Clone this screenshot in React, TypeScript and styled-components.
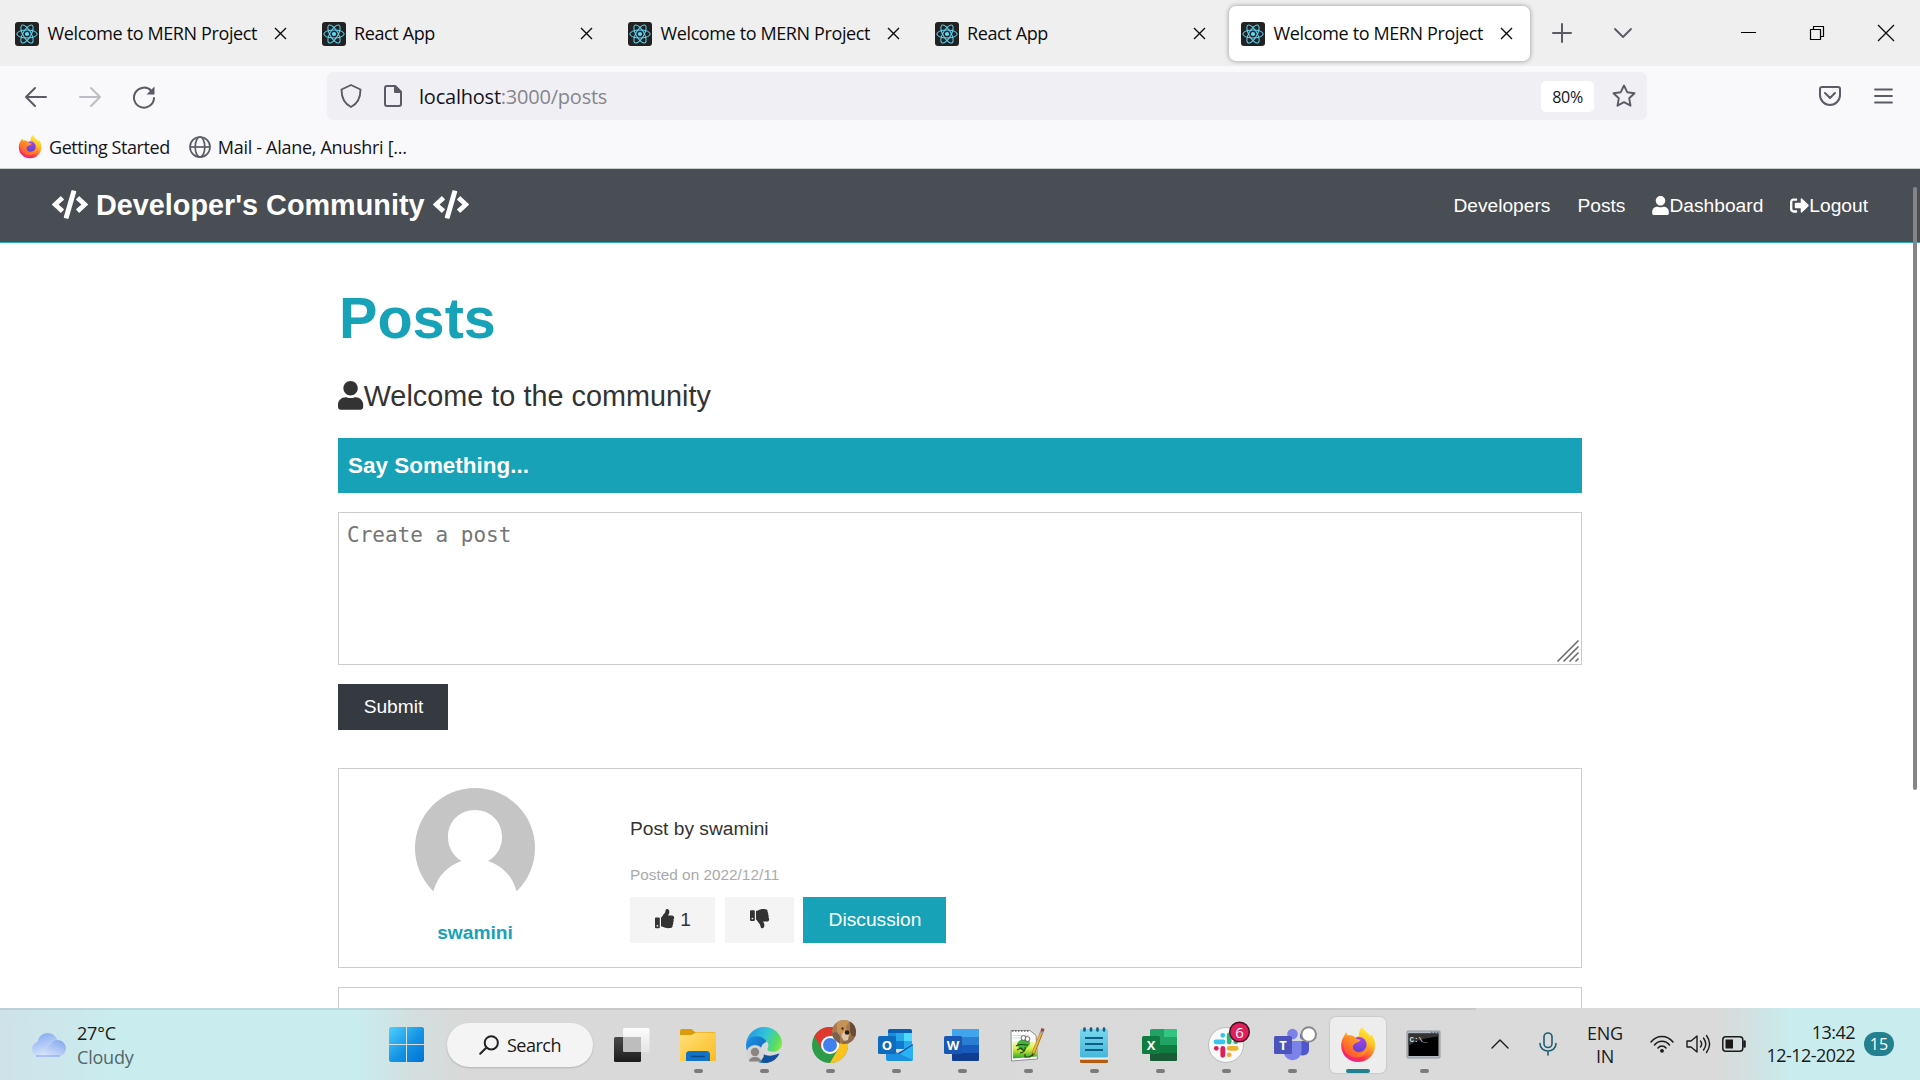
import React from "react";
import styled, { createGlobalStyle } from "styled-components";
import { FaCode, FaUser, FaSignOutAlt, FaThumbsUp, FaThumbsDown } from "react-icons/fa";

const ui = `"Open Sans", "Noto Sans", sans-serif`;
const arial = `"Liberation Sans", Arial, sans-serif`;
const teal = "#17a2b8";

const Global = createGlobalStyle`
  *, *::before, *::after { box-sizing: border-box; }
  body { margin: 0; background: #fff; overflow: hidden; }
  svg { display: block; flex: none; overflow: visible; }
  h1, h2, h3, p { margin: 0; }
`;

const Screen = styled.div`
  width: 1920px;
  height: 1080px;
  display: flex;
  flex-direction: column;
  overflow: hidden;
`;

/* ---------- browser chrome ---------- */
const TabStrip = styled.div`
  height: 66px;
  flex: none;
  display: flex;
  align-items: center;
  background: #efefef;
  padding-left: 3px;
`;
const Tab = styled.div<{ $active?: boolean }>`
  width: ${(p) => (p.$active ? 301 : 306.5)}px;
  height: 55px;
  flex: none;
  display: flex;
  align-items: center;
  gap: 8.5px;
  padding: 1px 16px 0 12px;
  border-radius: 7px;
  background: ${(p) => (p.$active ? "#fff" : "transparent")};
  box-shadow: ${(p) => (p.$active ? "0 0 5px rgba(0, 0, 0, 0.38)" : "none")};
`;
const TabTitle = styled.span`
  flex: 1;
  white-space: nowrap;
  font: 18px/26px ${ui};
  letter-spacing: -0.38px;
  padding-bottom: 1px;
  color: #0c0c0d;
`;
const TabClose = styled.div<{ $active?: boolean }>`
  width: 13px;
  margin-right: ${(p) => (p.$active ? 0 : 6)}px;
`;
const StripIcons = styled.div`
  display: flex;
  align-items: center;
  margin-left: 23px;
  gap: 43px;
`;
const WindowButtons = styled.div`
  display: flex;
  align-items: center;
  gap: 54px;
  margin-left: auto;
  margin-right: 26px;
`;
const Toolbar = styled.div`
  height: 61px;
  flex: none;
  display: flex;
  align-items: center;
  background: #f9f9fb;
  padding: 0 27px 0 25px;
`;
const NavIcons = styled.div`
  display: flex;
  gap: 32px;
  width: 302px;
`;
const UrlBar = styled.div`
  width: 1320px;
  height: 48px;
  margin-bottom: 1px;
  display: flex;
  align-items: center;
  background: #f0f0f4;
  border-radius: 6px;
  padding: 0 11px 0 12px;
`;
const UrlText = styled.div`
  flex: 1;
  margin-left: 16px;
  padding-top: 2px;
  font: 20px/28px ${ui};
  letter-spacing: -0.22px;
  color: #15141a;
  span { color: #86858c; }
`;
const PageIconSlot = styled.div`margin-left: 20px;`;
const Zoom = styled.div`
  width: 53px;
  height: 31px;
  margin-right: 18px;
  border-radius: 5px;
  background: #fff;
  text-align: center;
  font: 16px/32px ${ui};
  letter-spacing: -0.3px;
  color: #15141a;
`;
const RightTools = styled.div`
  margin-left: auto;
  display: flex;
  align-items: center;
  gap: 33px;
  padding-bottom: 2px;
`;
const Bookmarks = styled.div`
  height: 42px;
  flex: none;
  display: flex;
  background: #f9f9fb;
  border-bottom: 1px solid #c9cdc9;
  padding: 8px 0 0 18px;
`;
const Bookmark = styled.div<{ $spacing: number }>`
  display: flex;
  align-items: center;
  gap: 7px;
  height: 24px;
  margin-right: 19px;
  font: 18px/24px ${ui};
  letter-spacing: ${(p) => p.$spacing}px;
  color: #15141a;
  white-space: nowrap;
`;

/* ---------- web page ---------- */
const Page = styled.div`
  position: relative;
  flex: 1;
  min-height: 0;
  overflow: hidden;
  font: 19.2px/30.7px ${arial};
  color: #333;
`;
const SiteNav = styled.nav`
  height: 74px;
  display: flex;
  align-items: center;
  justify-content: space-between;
  padding: 0 52px;
  background: #494d54;
  border-bottom: 1px solid #2aa9ba;
  color: #fff;
`;
const Brand = styled.h1`
  display: flex;
  align-items: center;
  gap: 8px;
  padding-bottom: 2px;
  font-size: 28.8px;
  font-weight: 700;
  line-height: 34px;
`;
const Links = styled.div`
  display: flex;
  gap: 27px;
  padding-top: 1px;
`;
const NavLink = styled.a`
  display: flex;
  align-items: center;
  color: #fff;
`;
const Main = styled.main`
  width: 1244px;
  margin: 0 auto;
  padding-top: 41px;
`;
const Heading = styled.h1`
  padding-left: 1px;
  font-size: 57.6px;
  line-height: 69px;
  color: ${teal};
`;
const Lead = styled.p`
  display: flex;
  align-items: center;
  margin-top: 20px;
  height: 46px;
  font-size: 28.8px;
  letter-spacing: 0.02px;
  svg { margin: 0 0.5px 2px 0; }
`;
const FormHeader = styled.h3`
  margin-top: 19px;
  height: 55px;
  padding: 0 10px;
  background: ${teal};
  color: #fff;
  font-size: 22.46px;
  line-height: 55px;
`;
const PostInput = styled.div`
  height: 153px;
  margin-top: 19px;
  padding: 8px 2px 2px 8px;
  border: 1px solid #ccc;
  display: flex;
  justify-content: space-between;
  font: 21px/28px "DejaVu Sans Mono", monospace;
  color: #757575;
  svg { align-self: flex-end; }
`;
const Button = styled.button<{ $kind: "dark" | "light" | "primary"; $width: number }>`
  display: flex;
  align-items: center;
  justify-content: center;
  gap: 6px;
  width: ${(p) => p.$width}px;
  height: 46px;
  padding: 0 0 0 1px;
  border: 0;
  font: 19.2px/46px ${arial};
  background: ${(p) => ({ dark: "#343a40", light: "#f4f4f4", primary: teal })[p.$kind]};
  color: ${(p) => (p.$kind === "light" ? "#333" : "#fff")};
  svg { margin-bottom: 2px; }
`;
const SubmitRow = styled.div`
  margin: 19px 0 38px;
`;
const Card = styled.article`
  height: 200px;
  margin-bottom: 19px;
  padding: 19px;
  border: 1px solid #ccc;
  display: grid;
  grid-template-columns: 1fr 4fr;
  column-gap: 38.4px;
`;
const Author = styled.div`
  display: flex;
  flex-direction: column;
  align-items: center;
  gap: 10px;
  padding-left: 1px;
  color: ${teal};
  font-weight: 700;
`;
const PostBody = styled.div`
  display: flex;
  flex-direction: column;
  padding: 26px 0 0 0.5px;
`;
const PostText = styled.p`line-height: 30px;`;
const PostDate = styled.p`
  margin: 18px 0 9px;
  font-size: 15.36px;
  line-height: 26px;
  color: #aaa;
`;
const Actions = styled.div`
  display: flex;
  gap: 9.5px;
`;
const ScrollThumb = styled.div`
  position: absolute;
  top: 18px;
  right: 3px;
  width: 4px;
  height: 603px;
  border-radius: 2px;
  background: #858585;
`;

/* ---------- taskbar ---------- */
const Taskbar = styled.div`
  position: relative;
  height: 72px;
  flex: none;
  display: flex;
  align-items: center;
  background: linear-gradient(90deg, #cfe1e9 0, #c9ecee 110px, #c9ecee 360px, #d3dfdf 410px, #d9d9d9 460px, #dadada 1720px, #d0e2e3 1755px, #c9ecee 1790px, #c9ecee 100%);
  font: 18px/23px ${ui};
  color: #1a1a1a;
  &::before {
    content: "";
    position: absolute;
    top: 0;
    left: 0;
    width: 1476px;
    height: 2px;
    background: rgba(0, 0, 0, 0.08);
  }
`;
const Weather = styled.div`
  display: flex;
  align-items: center;
  gap: 11px;
  width: 359px;
  margin-left: 30px;
  padding-top: 2px;
  letter-spacing: -0.2px;
  line-height: 24px;
`;
const Muted = styled.div`color: #52676b;`;
const Search = styled.div`
  width: 146px;
  height: 44px;
  margin: 1px 6px 0 23px;
  border-radius: 22px;
  background: #f4f4f4;
  box-shadow: 0 1px 2px rgba(0, 0, 0, 0.18);
  display: flex;
  align-items: center;
  gap: 8px;
  padding: 1px 0 0 32px;
  letter-spacing: -0.5px;
`;
const Apps = styled.div`display: flex;`;
const AppSlot = styled.div`
  width: 66px;
  height: 72px;
  display: flex;
  flex-direction: column;
  align-items: center;
`;
const AppTile = styled.div<{ $active?: boolean }>`
  width: 56px;
  height: 56px;
  margin-top: 9px;
  display: flex;
  flex-direction: column;
  align-items: center;
  padding-top: 10px;
  border-radius: 6px;
  background: ${(p) => (p.$active ? "#ededed" : "transparent")};
  box-shadow: ${(p) => (p.$active ? "0 0 1px 1px rgba(0, 0, 0, 0.07)" : "none")};
`;
const Running = styled.div<{ $active?: boolean }>`
  width: ${(p) => (p.$active ? 24 : 9)}px;
  height: 5px;
  margin-top: 6px;
  border-radius: 3px;
  background: ${(p) => (p.$active ? "#23808f" : "#7b7b7b")};
`;
const Tray = styled.div`
  margin-left: auto;
  display: flex;
  align-items: center;
  padding-right: 26px;
`;
const MicSlot = styled.div`margin-left: 30px;`;
const Language = styled.div`
  width: 40px;
  margin: 1px 25px 0 28px;
  text-align: center;
  letter-spacing: -0.2px;
`;
const Status = styled.div`
  display: flex;
  align-items: center;
  gap: 12px;
`;
const Clock = styled.div`
  width: 90px;
  margin: -1px 9px 0 19px;
  text-align: right;
  letter-spacing: -0.55px;
  white-space: nowrap;
`;
const Count = styled.div`
  width: 30px;
  height: 24px;
  border-radius: 12px;
  background: #23808f;
  color: #fff;
  text-align: center;
  font: 16px/24px ${ui};
`;

/* ---------- drawings ---------- */
const ReactIcon = () => (
  <svg width="24" height="24" viewBox="0 0 24 24">
    <rect width="24" height="24" rx="3" fill="#222" />
    <g fill="none" stroke="#61dafb" strokeWidth="1">
      {[0, 60, 120].map((a) => (
        <ellipse key={a} cx="12" cy="12" rx="10.2" ry="4" transform={`rotate(${a} 12 12)`} />
      ))}
    </g>
    <circle cx="12" cy="12" r="2.1" fill="#61dafb" />
  </svg>
);
const Cross = ({ size = 11 }: { size?: number }) => (
  <svg width={size} height={size} viewBox="0 0 11 11" fill="none" stroke="#0c0c0d" strokeWidth={size > 12 ? 0.9 : 1.4}>
    <path d="M0 0l11 11M11 0L0 11" />
  </svg>
);
const Line = ({ w, h, d, color = "#5b5b66", sw = 2 }: { w: number; h: number; d: string; color?: string; sw?: number }) => (
  <svg width={w} height={h} viewBox={`0 0 ${w} ${h}`} fill="none" stroke={color} strokeWidth={sw} strokeLinecap="round" strokeLinejoin="round">
    <path d={d} />
  </svg>
);

const Firefox = ({ size, id }: { size: number; id: string }) => (
  <svg width={size} height={size} viewBox="0 0 36 36">
    <defs>
      <linearGradient id={`${id}a`} x1="0.800" y1="0.050" x2="0.300" y2="0.980">
        <stop offset="0" stopColor="#fff13a" />
        <stop offset="0.330" stopColor="#ffc329" />
        <stop offset="0.570" stopColor="#ff7a2a" />
        <stop offset="0.800" stopColor="#ff3350" />
        <stop offset="1" stopColor="#e8208a" />
      </linearGradient>
      <radialGradient id={`${id}b`} cx="0.600" cy="0.200" r="0.850">
        <stop offset="0" stopColor="#a542e8" />
        <stop offset="1" stopColor="#5b45d0" />
      </radialGradient>
      <linearGradient id={`${id}c`} x1="0.900" y1="0.100" x2="0.100" y2="0.900">
        <stop offset="0" stopColor="#ffb52c" />
        <stop offset="0.500" stopColor="#ff8426" />
        <stop offset="1" stopColor="#ff4a3c" />
      </linearGradient>
    </defs>
    <path fill={`url(#${id}a)`} d="M22 0c2 3.500 6 5.500 8.300 9.200l.9-2c3 3.500 4 7.500 3.900 11.300C34.900 28 27.500 35 18.200 35 8.500 35 1.200 28 1.200 18.500c0-4 1.300-7.500 3-9.800L6 5.200l1.800 3.300C11 8 13.500 8.500 15.500 10.500L19 9c-.5-3 .5-6.500 3-9z" />
    <circle cx="19" cy="17.500" r="7.600" fill={`url(#${id}b)`} />
    <path fill={`url(#${id}c)`} d="M3 15C4 12 5.500 9.500 8 8.700c3-.5 5.500.3 7.500 2.300 1.500 1.300 3.500 1.200 5 1.800-.3 1.700-2 2.200-4 2.900-1.500.8-2.500 1.300-3.500 3-.8 3.500 2 6.500 5.500 6.800 4.500.4 8-2.500 9-6.500 1 6-4 11.500-11 11.500C8 30.500 2 23.500 3 15z" />
  </svg>
);
const Globe = () => (
  <svg width="22" height="22" viewBox="0 0 22 22" fill="none" stroke="#5b5b66" strokeWidth="1.700">
    <circle cx="11" cy="11" r="10" />
    <ellipse cx="11" cy="11" rx="4.800" ry="10" />
    <path d="M1 11h20" />
  </svg>
);
const Avatar = () => (
  <svg width="120" height="120" viewBox="0 0 120 120">
    <defs><clipPath id="avatar"><circle cx="60" cy="60" r="60" /></clipPath></defs>
    <path clipPath="url(#avatar)" fillRule="evenodd" fill="#c5c5c5" d="M0 0h120v103h-18.500C97 87 87 78 73 73c9-5 14-14 14-24 0-15.500-11.500-27-27-27S33 33.500 33 49c0 10 5 19 13.500 24C33 78 23 87 18.500 103H0z" />
  </svg>
);
const Cloud = () => (
  <svg width="36" height="24" viewBox="0 0 36 24">
    <defs>
      <linearGradient id="cl" x1="0" y1="0" x2="0.300" y2="1">
        <stop offset="0" stopColor="#80a6ee" /><stop offset="0.600" stopColor="#b4cbf7" /><stop offset="1" stopColor="#d7e3fb" />
      </linearGradient>
      <linearGradient id="cl2" x1="1" y1="0" x2="0.200" y2="1">
        <stop offset="0" stopColor="#7ea4ec" /><stop offset="1" stopColor="#dde8fc" />
      </linearGradient>
    </defs>
    <path fill="url(#cl)" d="M8 23.500a7.500 7.500 0 0 1-.5-14.500C8.500 3.500 12.500 0 17.500 0S26.500 3.500 27.500 8L24 23.500z" />
    <path fill="url(#cl2)" d="M8 23.500h20a8.200 8.200 0 1 0-7.500-12C17 13 16 20 8 23.500z" />
    <path stroke="#7d9df0" d="M6 23h24" />
  </svg>
);
const WindowsLogo = () => (
  <svg width="35" height="35" viewBox="0 0 35 35">
    <defs><linearGradient id="win" gradientUnits="userSpaceOnUse" x1="0" y1="0" x2="35" y2="35"><stop stopColor="#4cd0ff" /><stop offset="0.550" stopColor="#1493e4" /><stop offset="1" stopColor="#0072d3" /></linearGradient></defs>
    <path fill="url(#win)" d="M1.500 0H17v17H0V1.500zM18 0h15.500L35 1.500V17H18zM0 18h17v17H1.500L0 33.500zM18 18h17v15.500L33.500 35H18z" />
  </svg>
);
const letter = { fill: "#fff", fontFamily: "Open Sans, sans-serif", fontWeight: 700, fontSize: 13, textAnchor: "middle" as const };

const TaskView = () => (
  <>
    <defs>
      <linearGradient id="tv" x1="0" y1="0" x2="0" y2="1"><stop stopColor="#4a4a4a" /><stop offset="1" stopColor="#1c1c1c" /></linearGradient>
      <linearGradient id="tw" x1="0" y1="0" x2="0" y2="1"><stop stopColor="#fff" /><stop offset="1" stopColor="#e6e6e6" /></linearGradient>
    </defs>
    <rect x="0" y="10" width="27" height="25" rx="1.500" fill="url(#tv)" />
    <rect x="9" y="1" width="26.500" height="24" rx="1.500" fill="url(#tw)" opacity="0.930" />
    <path d="M9 10h18v15H10.500L9 23.500z" fill="#bdbdbd" />
  </>
);
const Folder = () => (
  <>
    <defs><linearGradient id="fo" x1="0" y1="0" x2="1" y2="1"><stop stopColor="#ffe07a" /><stop offset="1" stopColor="#fbbc1f" /></linearGradient></defs>
    <path fill="#dc9b0a" d="M0 4a2 2 0 0 1 2-2h9.500l3.500 3h19a2 2 0 0 1 2 2v6H0z" />
    <path fill="url(#fo)" d="M0 8h11.500L16 5.500h20V34H0z" />
    <path fill="#1173c7" d="M6 34v-6.500A3.500 3.500 0 0 1 9.500 24h17a3.500 3.500 0 0 1 3.500 3.500V34z" />
    <path stroke="#0a4a8c" strokeWidth="1.500" d="M11 29.500h14" />
  </>
);
const Edge = () => (
  <>
    <defs>
      <linearGradient id="e1" x1="0" y1="0.300" x2="1" y2="0.600"><stop stopColor="#2396dc" /><stop offset="0.500" stopColor="#31c4dc" /><stop offset="0.850" stopColor="#5adb62" /><stop offset="1" stopColor="#7de84a" /></linearGradient>
      <linearGradient id="e2" x1="0" y1="0.300" x2="1" y2="0.800"><stop stopColor="#1a8be0" /><stop offset="1" stopColor="#0c5aa8" /></linearGradient>
    </defs>
    <path fill="url(#e2)" d="M0 18C.5 12 5 8 11 8.500c5 .3 9 3 9.500 6.500-3 1-5.500 3.500-5.500 7 .5 6 7 8 13 6l5-1.500C30.500 32.500 25 36 18 36 8 36 0 28 0 18z" />
    <path fill="#124f9c" d="M14 21c0 5 5 8.500 11 8 3.500-.2 6.500-1.200 8.500-2.500C30.500 32.500 25 36 19 36c-5-2-8-9-5-15z" />
    <path fill="url(#e1)" d="M0 17C1 7 9 0 18 0c10 0 18 7.500 18 16 0 5.500-4 8.800-8.500 8.800-4.500 0-7-1.500-6-3.300 2-3 .5-7-3-9.500C13 7.500 2 8.500 0 17z" />
    <circle cx="9" cy="27" r="9" fill="#d5d5d5" />
    <circle cx="9" cy="25" r="4.200" fill="#8a8582" />
    <path d="M3 34.500c0-3 2.500-4.500 6-4.500s6 1.500 6 4.500z" fill="#8a8582" />
  </>
);
const Chrome = () => (
  <>
    <defs><clipPath id="profile"><circle cx="32" cy="5" r="12" /></clipPath></defs>
    <circle cx="18" cy="18" r="18" fill="#2c9c49" />
    <path fill="#fcc31e" d="M18 9h15.600A18 18 0 0 1 18 36l7.800-13.500z" />
    <path fill="#df382d" d="M2.400 9l7.800 13.500L18 9h15.600A18 18 0 0 0 2.400 9z" />
    <circle cx="18" cy="18" r="9" fill="#fff" />
    <circle cx="18" cy="18" r="7" fill="#3f7fee" />
    <g clipPath="url(#profile)">
      <path fill="#a8794b" d="M20-7h24v24H20z" />
      <path fill="#c49358" d="M25-7h13l-4 7 2 5-5 4-6-3z" />
      <path fill="#6b4a33" d="M38-7h8v17h-6l-2-6z" />
      <path fill="#776154" d="M20 6l5-1 3 5v8h-8z" />
      <path fill="#8b6a50" d="M32 10l10-1v8H30z" />
      <path fill="#ddc5a6" d="M29 9l3-5 5 4-1 5-4 1z" />
      <circle cx="35" cy="5.500" r="2.300" fill="#2c2019" />
      <circle cx="30.500" cy="1.500" r="1.200" fill="#4a2c1e" />
    </g>
  </>
);
const Outlook = () => (
  <>
    <rect x="10" y="2" width="24" height="20" rx="1.500" fill="#0a5fb0" />
    <path fill="#1490df" d="M10 6h8v8h-8z" /><path fill="#28a8ea" d="M18 6h8v8h-8zM10 14h8v8h-8z" /><path fill="#50d9ff" d="M26 6h8v8h-8z" /><path fill="#0f78d4" d="M18 14h8v8h-8z" /><path fill="#28a8ea" d="M26 14h8v8h-8z" />
    <path fill="#0a4f9c" d="M8 22l12 4 15-9v4L20 31z" /><path fill="#2bb0f4" d="M35 18v14a2 2 0 0 1-2 2H9l11-6z" /><path fill="#1b8fe0" d="M8 21l27 12-2 1H10a2 2 0 0 1-2-2z" />
    <rect y="9" width="18" height="18" rx="1.500" fill="#0f6cbd" /><text {...letter} x="9" y="23">O</text>
  </>
);
const Word = () => (
  <>
    <rect x="8" y="2" width="27" height="32" rx="1.500" fill="#2b7cd3" /><path fill="#41a5ee" d="M8 3.500A1.500 1.500 0 0 1 9.500 2h24A1.500 1.500 0 0 1 35 3.500V10H8z" /><path fill="#185abd" d="M8 18h27v8H8z" /><path fill="#103f91" d="M8 26h27v6.500a1.500 1.500 0 0 1-1.500 1.500h-24A1.500 1.500 0 0 1 8 32.500z" />
    <rect y="9" width="18" height="18" rx="1.500" fill="#1a56b4" /><text {...letter} x="9" y="23">W</text>
  </>
);
const NotepadPP = () => (
  <>
    <defs><linearGradient id="npp" x1="0" y1="0" x2="0" y2="1"><stop stopColor="#f4fbd0" /><stop offset="0.450" stopColor="#d8ee3c" /><stop offset="1" stopColor="#2aa52a" /></linearGradient></defs>
    <path fill="#fdfdfd" stroke="#777" strokeWidth="0.800" d="M1 3.500h19l6 5 1.500 23.500L1.500 34z" />
    <path stroke="#666" strokeWidth="1.500" strokeDasharray="1.500 1.500" d="M2 4h18" />
    <path stroke="#cfdfee" d="M2.500 8.500h16M2.500 11h8" />
    <path fill="url(#npp)" d="M2.500 14H26l1 15.500-24 2z" />
    <path fill="#45b53a" d="M7 17c1-4 5-5 9-4.500s5 4 3 6-3 3.500-5 4.500-6-1-7-6z" />
    <path stroke="#1d3d16" strokeWidth="1.100" fill="none" d="M6 19c4-3 8-1 12-1M7 23l4-2 3 3M10 26c3 0 6-3 5-6M15 27v3h5l2-2" />
    <circle cx="13.500" cy="11" r="2.400" fill="#fff" stroke="#444" strokeWidth="0.800" /><circle cx="17.500" cy="12" r="2.400" fill="#fff" stroke="#444" strokeWidth="0.800" />
    <path stroke="#9b6a1d" strokeWidth="3.200" d="M23 27L32 4.500" /><path stroke="#f3b43a" strokeWidth="2" d="M23.300 26L31.500 5" /><path stroke="#9b9b9b" strokeWidth="3.200" d="M31.200 6.500l.8-2" /><path stroke="#a0403a" strokeWidth="3.200" d="M32 4.500L33 1.500" /><path stroke="#333" strokeWidth="1.400" d="M22.300 29l.7-2" />
  </>
);
const Notepad = () => (
  <>
    <defs><linearGradient id="np" x1="0" y1="0" x2="0" y2="1"><stop stopColor="#7bd6ee" /><stop offset="1" stopColor="#45b7dc" /></linearGradient></defs>
    <path fill="#b85a10" d="M4 32.500h28v2a1.500 1.500 0 0 1-1.500 1.500h-25A1.500 1.500 0 0 1 4 34.500z" /><path fill="#e9f1f3" d="M4 30h28v2.500H4z" />
    <rect x="4" y="2" width="28" height="28.500" rx="1.500" fill="url(#np)" />
    <path stroke="#0b5f86" strokeWidth="1.800" d="M9 11h18M9 17h18M9 23h18" />
    <path stroke="#0b5f86" strokeWidth="2.600" strokeLinecap="round" d="M8.500 1.500v2M15 1.500v2M21.500 1.500v2M28 1.500v2" />
  </>
);
const Excel = () => (
  <>
    <rect x="8" y="2" width="27" height="32" rx="1.500" fill="#21a366" /><path fill="#33c481" d="M22 2h11.500A1.500 1.500 0 0 1 35 3.500V10H22z" /><path fill="#107c41" d="M8 18h27v8H8z" /><path fill="#185c37" d="M8 26h27v6.500a1.500 1.500 0 0 1-1.500 1.500h-24A1.500 1.500 0 0 1 8 32.500z" />
    <rect y="9" width="18" height="18" rx="1.500" fill="#107c41" /><text {...letter} x="9" y="23">X</text>
  </>
);
const Slack = () => (
  <>
    <circle cx="18" cy="18" r="17.500" fill="#f9f9f9" stroke="#bbb" />
    <g strokeWidth="4.800" strokeLinecap="round">
      <path stroke="#36c5f0" d="M8 14.800h7M14.800 8.300v0" /><path stroke="#2eb67d" d="M21.200 8v7M27.700 14.800v0" /><path stroke="#ecb22e" d="M21.200 21.300h7M21.200 27.800v0" /><path stroke="#e01e5a" d="M14.800 21.300v7M8.300 21.300v0" />
    </g>
    <circle cx="31.500" cy="5" r="9.800" fill="#e01e5a" stroke="#4a0f24" strokeWidth="1.400" />
    <text x="31.500" y="10.500" fill="#fff" textAnchor="middle" fontSize="15" fontFamily="Open Sans, sans-serif">6</text>
  </>
);
const Teams = () => (
  <>
    <circle cx="30" cy="9" r="4" fill="#4f58ca" /><path fill="#4f58ca" d="M25 14h10v9a6 6 0 0 1-10 4z" />
    <circle cx="18.500" cy="7" r="5.300" fill="#7b83eb" /><path fill="#7b83eb" d="M10 14h17.500v11a9 9 0 0 1-17.500 2z" />
    <rect y="9" width="18" height="18" rx="1.500" fill="#4b53bc" /><text {...letter} x="9" y="23">T</text>
    <circle cx="34.700" cy="7.500" r="7.300" fill="#fff" stroke="#8a8a8a" strokeWidth="2" />
  </>
);
const Terminal = () => (
  <>
    <rect x="1" y="4" width="33" height="27" rx="0.800" fill="#b3bcc6" stroke="#8f979e" />
    <rect x="2.500" y="6.500" width="30" height="22.500" fill="#000" />
    <path fill="#3a3a3a" d="M2.500 6.500H32.500v3C20 11 10 13 2.500 19z" opacity="0.900" />
    <path stroke="#3f5568" strokeDasharray="1.500 1.500" d="M25 5.300h8" />
    <text x="3.500" y="14.800" fill="#ddd" fontSize="7.500" fontFamily="Liberation Mono, monospace" fontWeight="700">C:\_</text>
  </>
);

const apps: { name: string; art: React.ReactNode; idle?: boolean; active?: boolean }[] = [
  { name: "task-view", art: <TaskView />, idle: true },
  { name: "folder", art: <Folder /> },
  { name: "edge", art: <Edge /> },
  { name: "chrome", art: <Chrome /> },
  { name: "outlook", art: <Outlook /> },
  { name: "word", art: <Word /> },
  { name: "notepadpp", art: <NotepadPP /> },
  { name: "notepad", art: <Notepad /> },
  { name: "excel", art: <Excel /> },
  { name: "slack", art: <Slack /> },
  { name: "teams", art: <Teams /> },
  { name: "firefox", art: <Firefox size={36} id="ffb" />, active: true },
  { name: "terminal", art: <Terminal /> },
];

const tabs = ["Welcome to MERN Project", "React App", "Welcome to MERN Project", "React App", "Welcome to MERN Project"];

export default function App() {
  return (
    <Screen>
      <Global />
      <TabStrip>
        {tabs.map((title, i) => (
          <Tab key={i} $active={i === 4}>
            <ReactIcon />
            <TabTitle>{title}</TabTitle>
            <TabClose $active={i === 4}><Cross /></TabClose>
          </Tab>
        ))}
        <StripIcons>
          <Line w={18} h={18} d="M9 0v18M0 9h18" sw={2} />
          <Line w={18} h={10} d="M1 1l8 8 8-8" sw={1.9} />
        </StripIcons>
        <WindowButtons>
          <Line w={15} h={2} d="M0.500 .5h14" color="#000" sw={1.2} />
          <Line w={14} h={14} d="M.5 3.500h10v10h-10zM3.500 3V.5h10v10H11" color="#000" sw={1.2} />
          <Cross size={16} />
        </WindowButtons>
      </TabStrip>
      <Toolbar>
        <NavIcons>
          <Line w={22} h={22} d="M21 11H1.500M10 2l-9 9 9 9" />
          <Line w={22} h={22} d="M1 11h19.500M12 2l9 9-9 9" color="#bdbdc3" />
          <svg width="22" height="22" viewBox="0 0 22 22" fill="none" stroke="#5b5b66" strokeWidth="2" strokeLinecap="round">
            <path d="M18.500 5A10 10 0 1 0 21 12" />
            <path d="M21.500 .5v8h-8z" fill="#5b5b66" stroke="none" />
          </svg>
        </NavIcons>
        <UrlBar>
          <Line w={24} h={26} d="M12 2l9.500 4.500c0 8-2.500 14-9.500 17.500C5 20.500 2.500 14.500 2.500 6.500z" sw={1.9} />
          <PageIconSlot>
            <svg width="20" height="24" viewBox="0 0 20 24" fill="none" stroke="#5b5b66" strokeWidth="2" strokeLinejoin="round">
              <path d="M4 2h8l6 6v12a2 2 0 0 1-2 2H4a2 2 0 0 1-2-2V4a2 2 0 0 1 2-2z" />
              <path d="M12 2v6h6z" fill="#5b5b66" />
            </svg>
          </PageIconSlot>
          <UrlText>localhost<span>:3000/posts</span></UrlText>
          <Zoom>80%</Zoom>
          <Line w={24} h={24} d="M12 1.500l3.200 6.700 7.300 1-5.300 5.100 1.300 7.400L12 18.200l-6.500 3.500 1.300-7.400-5.300-5.100 7.300-1z" sw={1.9} />
        </UrlBar>
        <RightTools>
          <Line w={22} h={20} d="M3 1h16a2 2 0 0 1 2 2v6a10 10 0 0 1-20 0V3a2 2 0 0 1 2-2zM6 7l5 5 5-5" />
          <Line w={19} h={16} d="M1 1.500h17M1 8h17M1 14.500h17" sw={1.8} />
        </RightTools>
      </Toolbar>
      <Bookmarks>
        <Bookmark $spacing={-0.43}><Firefox size={24} id="ffa" />Getting Started</Bookmark>
        <Bookmark $spacing={-0.3}><Globe />Mail - Alane, Anushri [...</Bookmark>
      </Bookmarks>

      <Page>
        <SiteNav>
          <Brand>
            <FaCode style={{ width: 36, height: 29 }} />
            Developer's Community
            <FaCode style={{ width: 36, height: 29 }} />
          </Brand>
          <Links>
            <NavLink>Developers</NavLink>
            <NavLink>Posts</NavLink>
            <NavLink><FaUser style={{ width: 17, height: 19 }} />Dashboard</NavLink>
            <NavLink><FaSignOutAlt style={{ width: 19, height: 19 }} />Logout</NavLink>
          </Links>
        </SiteNav>
        <Main>
          <Heading>Posts</Heading>
          <Lead><FaUser style={{ width: 25.2, height: 28.8 }} />Welcome to the community</Lead>
          <FormHeader>Say Something...</FormHeader>
          <PostInput>
            Create a post
            <Line w={22} h={22} d="M1 21L21 1M7 21L21 7M13 21l8-8M19 21l2-2" color="#6f6f6f" sw={1.7} />
          </PostInput>
          <SubmitRow><Button $kind="dark" $width={110}>Submit</Button></SubmitRow>
          <Card>
            <Author><Avatar />swamini</Author>
            <PostBody>
              <PostText>Post by swamini</PostText>
              <PostDate>Posted on 2022/12/11</PostDate>
              <Actions>
                <Button $kind="light" $width={85}><FaThumbsUp size={19.2} />1</Button>
                <Button $kind="light" $width={69}><FaThumbsDown size={19.2} /></Button>
                <Button $kind="primary" $width={143}>Discussion</Button>
              </Actions>
            </PostBody>
          </Card>
          <Card />
        </Main>
        <ScrollThumb />
      </Page>

      <Taskbar>
        <Weather>
          <Cloud />
          <div>27°C<Muted>Cloudy</Muted></div>
        </Weather>
        <WindowsLogo />
        <Search>
          <Line w={20} h={20} d="M7.500 12.500L1.200 18.800M12.300 1.200a6.600 6.600 0 1 1 0 13.200 6.600 6.600 0 0 1 0-13.200z" color="#222" />
          Search
        </Search>
        <Apps>
          {apps.map((a) => (
            <AppSlot key={a.name}>
              <AppTile $active={a.active}>
                <svg width="36" height="36" viewBox="0 0 36 36">{a.art}</svg>
                {!a.idle && <Running $active={a.active} />}
              </AppTile>
            </AppSlot>
          ))}
        </Apps>
        <Tray>
          <Line w={18} h={10} d="M1 9l8-8 8 8" color="#1a1a1a" sw={1.4} />
          <MicSlot>
            <svg width="18" height="24" viewBox="0 0 18 24" fill="none" stroke="#1f5d70" strokeWidth="1.600" strokeLinecap="round">
              <rect x="5" y="1" width="8" height="14.500" rx="4" />
              <path d="M1 11.500c0 10 16 10 16 0M9 19v4" />
            </svg>
          </MicSlot>
          <Language>ENG<br />IN</Language>
          <Status>
            <svg width="24" height="18" viewBox="0 0 24 18" fill="none" stroke="#1a1a1a" strokeWidth="1.500" strokeLinecap="round">
              <path d="M1 7C7-.5 17-.5 23 7M4.500 10c4-5 11-5 15 0M8 13c2-2.600 6-2.600 8 0" />
              <circle cx="12" cy="15.800" r="1.900" fill="#1a1a1a" stroke="none" />
            </svg>
            <svg width="24" height="20" viewBox="0 0 24 20" fill="none" stroke="#1a1a1a" strokeWidth="1.400" strokeLinecap="round" strokeLinejoin="round">
              <path d="M1 7h4l6-5v16l-6-5H1zM14.500 7c1.500 2 1.500 4 0 6M17.500 4c3 4 3 8 0 12M20.500 1.500c4 5.500 4 11.500 0 17" />
            </svg>
            <svg width="24" height="16" viewBox="0 0 24 16" fill="none" stroke="#1a1a1a" strokeWidth="1.500">
              <rect x="0.800" y="0.800" width="20" height="14.400" rx="3" />
              <rect x="3.500" y="3.500" width="7.500" height="9" fill="#1a1a1a" stroke="none" />
              <path d="M22.500 5.500v5" strokeWidth="2.500" strokeLinecap="round" />
            </svg>
          </Status>
          <Clock>13:42<br />12-12-2022</Clock>
          <Count>15</Count>
        </Tray>
      </Taskbar>
    </Screen>
  );
}
